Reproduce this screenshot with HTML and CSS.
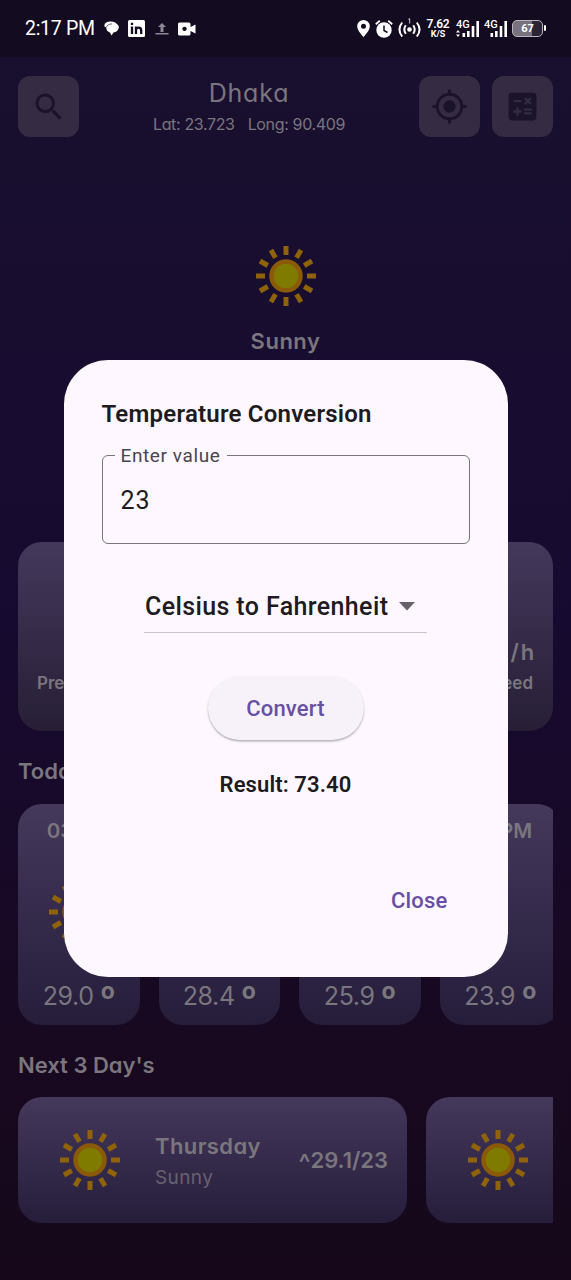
FILE: index.html
```html
<!DOCTYPE html>
<html lang="en">
<head>
<meta charset="utf-8">
<title>Weather</title>
<link rel="stylesheet" href="styles.css">
</head>
<body>
<svg class="defs" width="0" height="0" aria-hidden="true">
  <symbol id="sun" viewBox="0 0 62 62">
    <g stroke="#8f6309" stroke-width="5">
      <path d="M31 1v9"/>
      <path d="M31 1v9" transform="rotate(30 31 31)"/>
      <path d="M31 1v9" transform="rotate(60 31 31)"/>
      <path d="M31 1v9" transform="rotate(90 31 31)"/>
      <path d="M31 1v9" transform="rotate(120 31 31)"/>
      <path d="M31 1v9" transform="rotate(150 31 31)"/>
      <path d="M31 1v9" transform="rotate(180 31 31)"/>
      <path d="M31 1v9" transform="rotate(210 31 31)"/>
      <path d="M31 1v9" transform="rotate(240 31 31)"/>
      <path d="M31 1v9" transform="rotate(270 31 31)"/>
      <path d="M31 1v9" transform="rotate(300 31 31)"/>
      <path d="M31 1v9" transform="rotate(330 31 31)"/>
    </g>
    <circle cx="31" cy="31" r="14.5" fill="#7f7b00" stroke="#8a5a08" stroke-width="4.5"/>
  </symbol>
</svg>
<div class="phone">
  <div class="status">
    <span class="clock">2:17 PM</span>
    <svg class="s-chat" width="15" height="15" viewBox="0 0 15 15"><path fill="#fff" d="M.5 5.500C-.2 2 3 .4 7 .4c3 0 5 1 5.800 2.600C15 4 15 6 14.700 7c-.5 2.800-2.700 4.200-5.200 4.600L7.500 14.600 6 11.500C3.500 11 2.200 9 2.300 6.500z"/><path d="M2.300 6.300C3 4 5.500 2.900 8 2.900" stroke="#130b20" stroke-width=".6" fill="none"/></svg>
    <svg class="s-in" width="17" height="17" viewBox="0 0 17 17"><rect width="17" height="17" rx="1.500" fill="#fff"/><g fill="none" stroke="#130b20" stroke-width="2.300"><path d="M4 6.500v7.500M4 2.800v2.200M8 6.500v7.500M8 10q0-2.300 2.600-2.300t2.600 2.700V14"/></g></svg>
    <svg class="s-up" width="14" height="12" viewBox="0 0 14 12"><path fill="#8d8795" d="M7 0l4 4H8.500v5h-3V4H3zM.5 10h13v1.500H.5z"/></svg>
    <svg class="s-cam" width="18" height="14" viewBox="0 0 18 14"><path fill="#fff" fill-rule="evenodd" d="M1.500.5h9.500q1.500 0 1.500 1.500v3L17.500 2.500v9L12.500 9v3q0 1.500-1.500 1.500H1.500Q0 13.500 0 12V2Q0 .5 1.500.5zM6.500 4.700a2.200 2.200 0 1 0 .01 0z"/></svg>
    <span class="grow"></span>
    <svg class="s-pin" width="13" height="17" viewBox="0 0 13 17"><path fill="#fff" fill-rule="evenodd" d="M6.500 0A6.300 6.300 0 0 0 .2 6.300C.2 11 6.500 17 6.500 17s6.300-6 6.300-10.700A6.300 6.300 0 0 0 6.500 0zm0 3.800a2.500 2.500 0 1 1 0 5 2.500 2.500 0 0 1 0-5z"/></svg>
    <svg class="s-alarm" width="18" height="18" viewBox="0 0 18 18"><circle cx="9" cy="10" r="7.700" fill="#fff"/><path d="M.8 4.200l4-3.400M17.200 4.200l-4-3.400" stroke="#fff" stroke-width="1.800"/><path d="M9 5.500v5l3.500 2" stroke="#130b20" stroke-width="1.500" fill="none"/></svg>
    <svg class="s-hot" width="23" height="19" viewBox="0 0 23 19"><circle cx="11.500" cy="11.500" r="2.300" fill="#fff"/><path d="M7.800 7.200q-3 4.300 0 8.600M15.200 7.200q3 4.300 0 8.600M4.200 4.500q-5.500 7 0 14M18.800 4.500q5.500 7 0 14" fill="none" stroke="#fff" stroke-width="2"/><path d="M10.300 1.400L11.700.6v4.900" stroke="#c9c5cf" stroke-width="1" fill="none"/></svg>
    <span class="speed"><b>7.62</b><i>K/S</i></span>
    <span class="signal"><em>4G</em><svg width="24" height="17" viewBox="0 0 24 17"><path fill="#fff" d="M6.500 13h2.600v4H6.500zM11 11h2.600v6H11zM15.700 6h2.600v11h-2.600zM20.400 1H23v16h-2.600zM0 12.500L2 10l2 2.500zM0 14.500h4L2 17z"/></svg></span>
    <span class="signal second"><em>4G</em><svg width="24" height="17" viewBox="0 0 24 17"><path fill="#fff" d="M6.500 13h2.600v4H6.500zM11 11h2.600v6H11zM15.700 6h2.600v11h-2.600zM20.400 1H23v16h-2.600z"/></svg></span>
    <span class="battery">67</span>
  </div>

  <header class="header">
    <button class="tile"><svg width="36" height="36" viewBox="0 0 24 24"><path fill="#1b132a" d="M15.500 14h-.79l-.28-.27A6.470 6.470 0 0 0 16 9.500 6.500 6.500 0 1 0 9.500 16c1.610 0 3.090-.59 4.230-1.570l.27.28v.79l5 4.990L20.490 19zm-6 0C7.010 14 5 11.990 5 9.500S7.010 5 9.500 5 14 7.010 14 9.500 11.990 14 9.500 14z"/></svg></button>
    <div class="place">
      <div class="city">Dhaka</div>
      <div class="coords"><span>Lat: 23.723</span><span>Long: 90.409</span></div>
    </div>
    <div class="actions">
      <button class="tile"><svg width="37" height="37" viewBox="0 0 24 24"><path fill="#1b132a" d="M12 8a4 4 0 1 0 0 8 4 4 0 0 0 0-8zm8.940 3A8.990 8.990 0 0 0 13 3.060V1h-2v2.060A8.990 8.990 0 0 0 3.060 11H1v2h2.060A8.990 8.990 0 0 0 11 20.940V23h2v-2.060A8.990 8.990 0 0 0 20.940 13H23v-2zM12 19a7 7 0 1 1 0-14 7 7 0 0 1 0 14z"/></svg></button>
      <button class="tile"><svg width="37" height="37" viewBox="0 0 24 24"><path fill="#1b132a" d="M19 3H5a2 2 0 0 0-2 2v14c0 1.100.9 2 2 2h14a2 2 0 0 0 2-2V5a2 2 0 0 0-2-2zm-5.970 4.060L14.090 6l1.410 1.410L16.910 6l1.060 1.060-1.410 1.410 1.410 1.410-1.060 1.060-1.410-1.400-1.410 1.410-1.060-1.060 1.410-1.410zm-6.780.66h5v1.500h-5zM11.500 16h-2v2H8v-2H6v-1.500h2v-2h1.500v2h2zm6.500 1.250h-5v-1.500h5zm0-2.500h-5v-1.500h5z"/></svg></button>
    </div>
  </header>

  <section class="now">
    <svg width="62" height="62"><use href="#sun"/></svg>
    <div class="condition">Sunny</div>
  </section>

  <section class="stats card">
    <div class="stat"><span>Pressure</span></div>
    <div class="stat right"><strong>km/h</strong><span>Wind Speed</span></div>
  </section>

  <h2 class="title">Today</h2>
  <section class="hours">
    <div class="hour card"><span class="time">03 PM</span><svg width="62" height="62"><use href="#sun"/></svg><span class="temp">29.0<sup>o</sup></span></div>
    <div class="hour card"><span class="temp">28.4<sup>o</sup></span></div>
    <div class="hour card"><span class="temp">25.9<sup>o</sup></span></div>
    <div class="hour card"><span class="time">06 PM</span><span class="temp">23.9<sup>o</sup></span></div>
  </section>

  <h2 class="title next">Next 3 Day's</h2>
  <section class="days">
    <div class="day card">
      <svg width="62" height="62"><use href="#sun"/></svg>
      <div class="info"><div class="name">Thursday</div><div class="sky">Sunny</div></div>
      <div class="range"><span>^</span>29.1/23</div>
    </div>
    <div class="day card"><svg width="62" height="62"><use href="#sun"/></svg></div>
  </section>

  <div class="dialog" role="dialog">
    <h1>Temperature Conversion</h1>
    <div class="field"><label>Enter value</label><div class="value">23</div></div>
    <div class="select"><span>Celsius to Fahrenheit</span><svg width="16" height="9" viewBox="0 0 16 9"><path fill="#66616a" d="M0 0h16L8 8.500z"/></svg></div>
    <button class="convert">Convert</button>
    <div class="result">Result: 73.40</div>
    <button class="close">Close</button>
  </div>
</div>
</body>
</html>
```
FILE: styles.css
```css
* { box-sizing: border-box; }
body { margin: 0; }
button { border: 0; padding: 0; font: inherit; }
.defs { position: absolute; }
.phone {
  position: relative;
  width: 571px;
  height: 1280px;
  overflow: hidden;
  display: flex;
  flex-direction: column;
  background: linear-gradient(#190f2e 57px, #180d30 400px, #160a30 620px, #180922 1000px, #16081a 1280px);
  color: #7a767e;
  font-family: Inter, "Open Sans", sans-serif;
  font-feature-settings: "cv11";
}

/* Status bar */
.status {
  height: 57px;
  flex: none;
  display: flex;
  align-items: center;
  padding: 0 25px;
  background: #130b20;
  color: #fff;
  font-family: Roboto, sans-serif;
}
.clock { font-size: 19.500px; width: 69px; white-space: nowrap; letter-spacing: -.3px; }
.status svg { flex: none; }
.s-chat { margin-left: 10px; }
.s-in { margin-left: 9px; }
.s-up { margin-left: 10px; }
.s-cam { margin-left: 9px; }
.grow { flex: 1; }
.s-alarm { margin-left: 5px; }
.s-hot { margin-left: 5px; margin-top: -3px; }
.speed { width: 24px; margin-left: 5px; text-align: center; line-height: 10px; display: flex; flex-direction: column; white-space: nowrap; }
.speed b { font-size: 12px; font-weight: 600; letter-spacing: -.3px; }
.speed i { font-size: 9px; font-style: normal; font-weight: 700; }
.signal { margin-left: 6px; display: grid; width: 24px; height: 18px; }
.signal > * { grid-area: 1 / 1; }
.signal em { font: 500 11px/9px Roboto, sans-serif; }
.signal.second { margin-left: 4px; }
.battery {
  position: relative;
  width: 31px;
  height: 17px;
  margin-left: 4px;
  margin-right: 3px;
  border: 1.5px solid #b9b5bd;
  border-radius: 5px;
  background: linear-gradient(90deg, #77727d 66%, #2b2435 66%);
  font-size: 11px;
  font-weight: 700;
  line-height: 15px;
  text-align: center;
}
.battery::after { content: ""; position: absolute; left: 31px; top: 4px; width: 2px; height: 6px; background: #fff; border-radius: 1px; }

/* Header */
.header { display: grid; grid-template-columns: 61px 1fr 134px; padding: 19px 18px 0; height: 80px; flex: none; }
.tile { width: 61px; height: 61px; border-radius: 12px; background: #352b42; display: grid; place-items: center; }
.actions { display: flex; gap: 12px; }
.place { text-align: center; }
.city { font-size: 25px; line-height: 34px; letter-spacing: .8px; }
.coords { display: flex; justify-content: center; gap: 13px; font-size: 16px; line-height: 28px; white-space: nowrap; letter-spacing: -.35px; }

.now { height: 405px; flex: none; padding-top: 108px; text-align: center; }
.now svg { display: block; margin: 0 auto; }
.condition { margin-top: 18px; font-size: 22px; line-height: 32px; font-weight: 600; letter-spacing: .5px; }

.card { background: linear-gradient(#44385b, #261d3b); border-radius: 24px; }
.stats { height: 189px; flex: none; margin: 0 18px; padding: 0 20px 35px 19px; display: flex; justify-content: space-between; align-items: flex-end; background: linear-gradient(#44385b, #271e36); }
.stat { display: flex; flex-direction: column; text-align: right; font-size: 17px; line-height: 26px; font-weight: 600; }
.stat strong { font-size: 22px; line-height: 36px; font-weight: 600; letter-spacing: 1.800px; margin-right: -3px; }

.title { margin: 24px 18px 0; font-size: 22px; line-height: 32px; font-weight: 600; }
.hours { display: flex; gap: 19px; margin: 17px 18px 0; height: 221px; flex: none; overflow: hidden; }
.hour { width: 121.500px; flex: none; display: flex; flex-direction: column; align-items: center; padding: 11px 0; }
.hour svg { margin-top: 34px; }
.time { font-size: 20.500px; line-height: 32px; font-weight: 600; white-space: nowrap; }
.temp { margin-top: auto; font-size: 25px; line-height: 36px; white-space: nowrap; letter-spacing: -.4px; }
.temp sup { font-size: 23px; line-height: 0; font-weight: 700; margin-left: 7px; vertical-align: 6px; letter-spacing: 0; }

.title.next { margin-top: 24px; }
.days { display: flex; gap: 19px; margin: 16px 18px 0; height: 126px; flex: none; overflow: hidden; }
.day { width: 389px; flex: none; display: flex; align-items: center; padding: 0 19px 0 41px; }
.info { margin: 3px 0 0 34px; }
.name { font-size: 22px; line-height: 32px; font-weight: 600; letter-spacing: .4px; }
.sky { font-size: 19px; line-height: 32px; color: #68616f; letter-spacing: .4px; }
.range { margin-left: auto; font-size: 22px; line-height: 30px; font-weight: 600; }
.range span { font-size: 25px; line-height: 0; vertical-align: -4px; }

/* Conversion dialog */
.dialog {
  position: absolute;
  left: 63.500px;
  top: 360px;
  width: 444px;
  height: 617px;
  padding: 38px;
  border-radius: 44px;
  background: #fef7ff;
  color: #1d1b20;
  font-family: Roboto, sans-serif;
  display: flex;
  flex-direction: column;
  align-items: center;
}
.dialog h1 { margin: 0; align-self: flex-start; font-size: 24px; line-height: 32px; font-weight: 600; white-space: nowrap; letter-spacing: .22px; }
.field { position: relative; width: 368px; height: 89px; flex: none; margin-top: 25px; padding: 29px 18px; border: 1.500px solid #79747e; border-radius: 6px; }
.field label { position: absolute; left: 12px; top: -12px; padding: 0 7px 0 6px; background: #fef7ff; color: #49454f; font-size: 19px; line-height: 24px; letter-spacing: .6px; }
.value { font-size: 25px; line-height: 32px; letter-spacing: .9px; }
.select { width: 283px; height: 56px; margin-top: 33px; padding: 4px 12px 0 1px; border-bottom: 1px solid #c9c4cb; display: flex; align-items: center; justify-content: space-between; font-size: 25px; font-weight: 500; white-space: nowrap; letter-spacing: .38px; }
.convert { width: 156px; height: 64px; margin-top: 43px; border-radius: 32px; background: #f7f2fa; color: #6750a4; font-size: 22px; font-weight: 500; letter-spacing: .2px; box-shadow: 0 1.500px 2px #0000004d; }
.result { margin-top: 30px; font-size: 22px; line-height: 30px; font-weight: 600; letter-spacing: .1px; }
.close { align-self: flex-end; margin: 86px 22px 0 0; background: none; color: #6750a4; font-size: 22px; line-height: 30px; font-weight: 500; letter-spacing: .2px; }
```
